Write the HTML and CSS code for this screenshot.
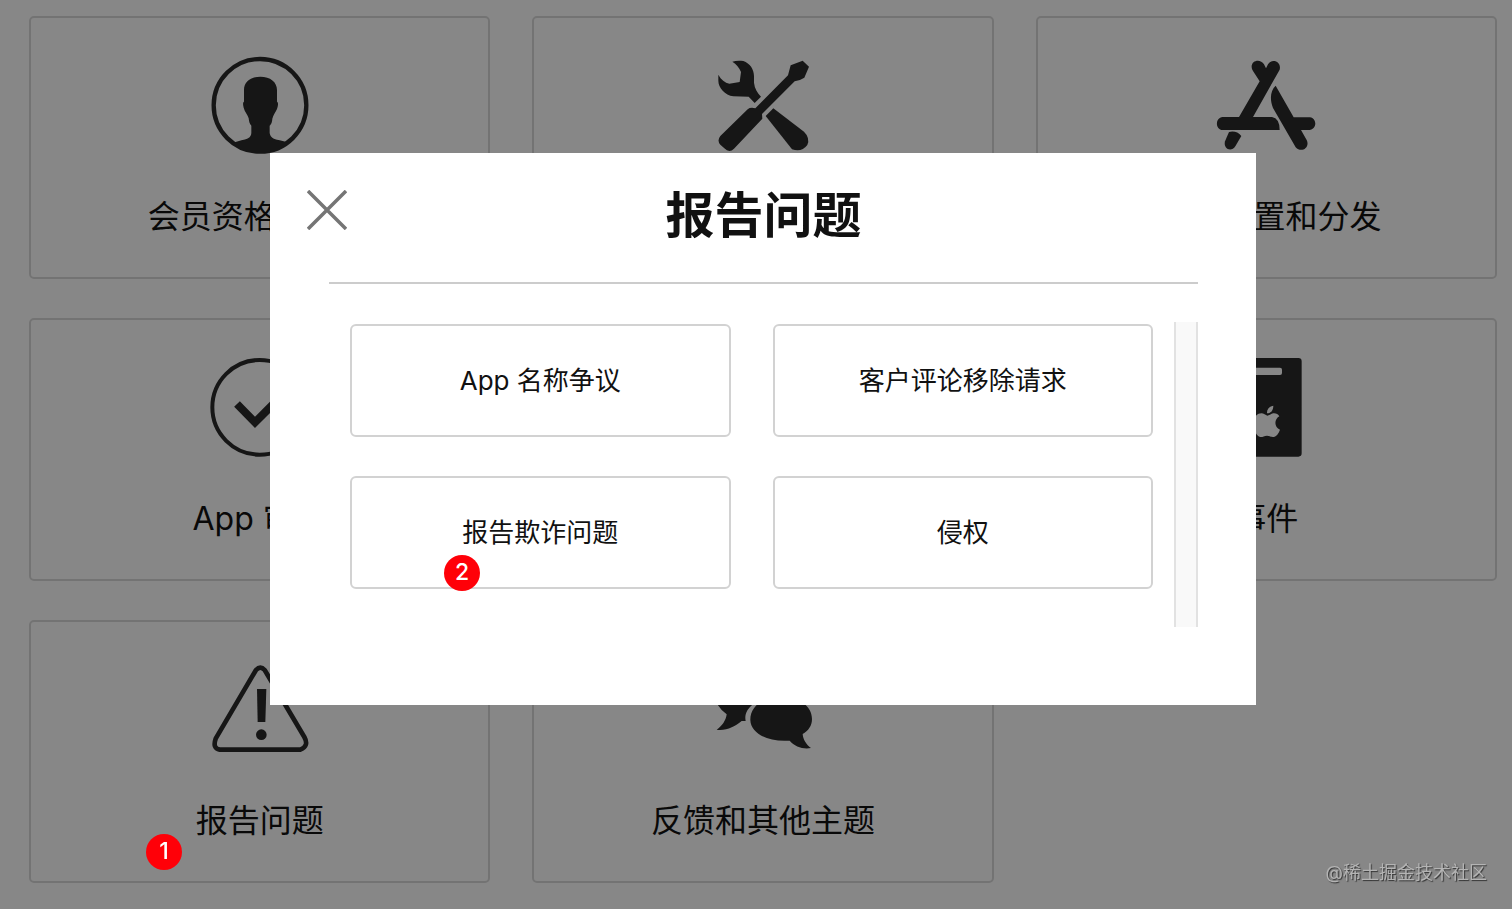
FILE: index.html
```html
<!DOCTYPE html>
<html lang="zh-CN">
<head>
<meta charset="utf-8">
<meta name="viewport" content="width=device-width, initial-scale=1">
<title>报告问题</title>
<link rel="stylesheet" href="styles.css">
</head>
<body>
<main class="topics">
  <a class="card" href="#membership">
    <svg class="icon" viewBox="62 51 294 294" aria-hidden="true">
      <circle cx="209" cy="196" r="139" fill="none" stroke="currentColor" stroke-width="13"/>
      <path d="M210 110C240 110 260 126 260 150L260 185C265 187 263 199 260 207C256 217 249 224 246 236C245 248 243 252 238 257L238 279C240 293 251 298 265 300L292 307A140 140 0 0 1 128 308L156 300C170 298 182 294 183 279L183 257C177 252 176 243 175 235C172 223 163 216 160 203C157 191 158 187 161 185L161 150C161 126 180 110 210 110Z"/>
    </svg>
    <span class="label">会员资格和帐户</span>
  </a>
  <a class="card" href="#development" aria-label="开发和技术">
    <svg class="icon" viewBox="42 51 294 294" aria-hidden="true">
      <path d="M97 65C106 62 118 62 130 63C150 70 162 88 162 108L162 128C164 146 172 158 183 170L164 189L146 170L100 169C75 165 55 143 55 122L55 104C63 119 75 128 88 131L119 126L123 96C118 82 109 73 97 65Z"/>
      <path d="M308 62L327 80L313 113Q301 121 284 124L186 222L187 236L102 326Q88 340 73 325L61 314Q50 302 61 288L143 208Q151 201 166 205L264 106L272 76Z"/>
      <path d="M220 205L312 275Q331 294 322 315Q305 338 276 328L197 228Z"/>
    </svg>
    <span class="label"></span>
  </a>
  <a class="card" href="#distribution">
    <svg class="icon" viewBox="51 51 294 294" aria-hidden="true">
      <path d="M155 82C153 60 182 55 192 73L198 85L204 73C217 54 245 65 239 89L159 231L216 231Q239 235 239 270L68 270C45 269 45 233 68 231L117 231L179 124L159 93Q155 87 155 82Z"/>
      <path d="M227 137L281 232L330 232C352 236 351 268 328 270L303 270L320 300C331 321 305 341 287 322L219 204C208 177 212 150 227 137Z"/>
      <path d="M87 276Q110 271 124 288L106 319C94 338 69 327 75 304Z"/>
    </svg>
    <span class="label">App 设置和分发</span>
  </a>
  <a class="card" href="#review">
    <svg class="icon" viewBox="62 57 294 294" aria-hidden="true">
      <circle cx="208" cy="202" r="142" fill="none" stroke="currentColor" stroke-width="12"/>
      <path d="M140 192L194 247L266 175" fill="none" stroke="currentColor" stroke-width="24"/>
    </svg>
    <span class="label">App 审核</span>
  </a>
  <a class="card" href="#payments" aria-label="付款和财务">
    <svg class="icon" viewBox="0 0 98 98" aria-hidden="true">
      <rect x="4" y="18" width="90" height="62" rx="6"/>
    </svg>
    <span class="label"></span>
  </a>
  <a class="card" href="#events">
    <svg class="icon" viewBox="51 57 294 294" aria-hidden="true">
      <path fill-rule="evenodd" d="M101 54H295Q305 54 305 64V340Q305 350 295 350H101Q91 350 91 340V64Q91 54 101 54ZM156 83Q150 83 150 89V99Q150 105 156 105H240Q246 105 246 99V89Q246 83 240 83ZM220 197C220 212 212 220 201 220C200 208 208 199 220 197ZM202 227C210 225 215 220 222 220C229 220 235 224 238 229C221 239 223 263 240 269C236 280 229 290 221 291C213 292 210 287 201 287C192 287 188 292 181 291C169 289 160 266 161 249C162 229 173 220 184 220C191 220 197 225 202 227Z"/>
    </svg>
    <span class="label">事件</span>
  </a>
  <a class="card" href="#report">
    <svg class="icon" viewBox="62 33 294 294" aria-hidden="true">
      <path d="M197 60Q210 46 223 60L342 261Q357 288 330 299H88Q66 295 76 266Z" fill="none" stroke="currentColor" stroke-width="14" stroke-linejoin="round"/>
      <path d="M200 117H228L225 216H202Z"/>
      <circle cx="213" cy="254" r="16"/>
    </svg>
    <span class="label">报告问题</span>
  </a>
  <a class="card" href="#feedback">
    <svg class="icon" viewBox="42 33 294 294" aria-hidden="true">
      <path d="M53 164C35 130 65 85 130 82C175 80 200 100 205 130L157 164C141 178 133 193 137 213L125 213C105 230 78 243 50 239C66 229 78 211 80 193Q65 183 53 164Z"/>
      <path d="M151 210C150 170 188 139 243 139C297 139 336 169 336 207C336 228 325 242 308 252C309 268 319 284 333 294C309 299 284 289 269 272C202 277 152 249 151 210Z"/>
    </svg>
    <span class="label">反馈和其他主题</span>
  </a>
  <span class="badge badge-one">1</span>
</main>

<div class="backdrop">
  <section class="modal" role="dialog" aria-modal="true" aria-labelledby="dialog-title">
    <button class="close" type="button" aria-label="关闭">
      <svg viewBox="0 0 40 40" aria-hidden="true"><path d="M1 1L39 39M39 1L1 39" fill="none" stroke="currentColor" stroke-width="3.5"/></svg>
    </button>
    <h1 class="title" id="dialog-title">报告问题</h1>
    <div class="scroller">
      <div class="options">
        <button class="option" type="button">App 名称争议</button>
        <button class="option" type="button">客户评论移除请求</button>
        <button class="option" type="button">报告欺诈问题<span class="badge badge-two">2</span></button>
        <button class="option" type="button">侵权</button>
      </div>
      <div class="track"></div>
    </div>
  </section>
</div>
<p class="watermark">@稀土掘金技术社区</p>
</body>
</html>
```
FILE: styles.css
```css
* {
  box-sizing: border-box;
}

body {
  margin: 0;
  min-height: 100vh;
  background: #fff;
  color: #111;
  font-family: Inter, "Noto Sans CJK SC", sans-serif;
}

.topics {
  position: relative;
  display: grid;
  grid-template-columns: repeat(3, 1fr);
  gap: 39px 42px;
  padding: 16px 15px 24px 29px;
}

.card {
  display: flex;
  flex-direction: column;
  align-items: center;
  gap: 41px;
  padding: 39px 16px 40px;
  border: 2px solid #dadada;
  border-radius: 5px;
  color: inherit;
  text-decoration: none;
}

.icon {
  width: 98px;
  height: 98px;
  overflow: visible;
  color: #2b2b2b;
  fill: currentColor;
}

.label {
  height: 41px;
  font-size: 32px;
  line-height: 41px;
  white-space: nowrap;
}

.backdrop {
  position: fixed;
  inset: 0;
  display: flex;
  align-items: flex-start;
  justify-content: center;
  padding: 153px 16px 0 30px;
  background: rgba(0, 0, 0, 0.47);
}

.modal {
  position: relative;
  width: 67.25%;
  padding: 33px 58px 78px 59px;
  background: #fff;
}

.close {
  position: absolute;
  top: 37px;
  left: 37px;
  width: 40px;
  height: 40px;
  padding: 0;
  border: 0;
  background: none;
  color: #757575;
}

.close svg {
  display: block;
}

.title {
  margin: 0 0 38px;
  padding-bottom: 36px;
  border-bottom: 2px solid #ccc;
  color: #111;
  font-size: 49px;
  font-weight: 700;
  line-height: 60px;
  text-align: center;
}

.scroller {
  display: flex;
  gap: 21px;
  padding-left: 21px;
}

.options {
  flex: 1;
  display: grid;
  grid-template-columns: repeat(2, 1fr);
  gap: 39px 42px;
  padding: 2px 0 38px;
}

.option {
  position: relative;
  height: 113px;
  padding: 0 0 5px;
  border: 2px solid #d2d2d2;
  border-radius: 6px;
  background: #fff;
  color: #111;
  font: inherit;
  font-size: 26px;
}

.track {
  width: 24px;
  border: solid #e2e2e2;
  border-width: 0 2px;
  background: #f9f9f9;
}

.badge {
  position: absolute;
  width: 36px;
  height: 36px;
  border-radius: 50%;
  background: #ff0008;
  color: #fff;
  font-size: 23px;
  font-weight: 500;
  line-height: 34px;
  text-align: center;
}

.badge-one {
  z-index: 1;
  bottom: 37px;
  left: 146px;
}

.badge-two {
  bottom: -4px;
  left: 92px;
}

.watermark {
  position: fixed;
  right: 25px;
  bottom: 22px;
  margin: 0;
  color: #b4b4b4;
  font-size: 18px;
  line-height: 28px;
  text-shadow: 1px 1px 1px #333;
}
```
